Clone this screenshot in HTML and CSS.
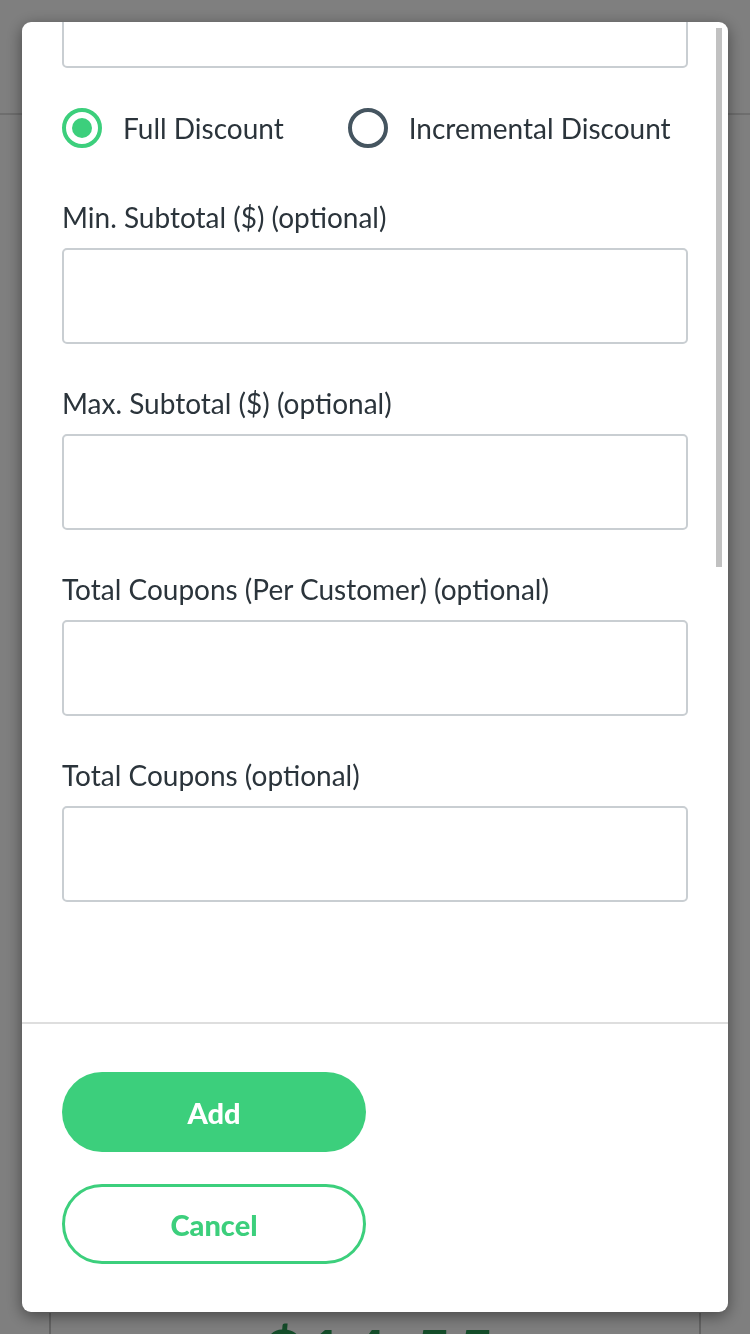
FILE: index.html
```html
<!DOCTYPE html>
<html lang="en">
<head>
<meta charset="utf-8">
<title>Add Coupon</title>
<link rel="stylesheet" href="styles.css">
</head>
<body>
<div class="page">
  <header class="page-header"></header>
  <section class="page-card">
    <div class="page-price">$14.55</div>
  </section>
</div>

<div class="overlay">
  <div class="modal">
    <div class="modal-body">
      <div class="modal-content">
        <div class="input input-first"></div>

        <div class="radio-row">
          <label class="radio">
            <span class="radio-circle radio-circle-on"><span class="radio-dot"></span></span>
            <span class="radio-text">Full Discount</span>
          </label>
          <label class="radio">
            <span class="radio-circle"></span>
            <span class="radio-text">Incremental Discount</span>
          </label>
        </div>

        <div class="field">
          <div class="field-label">Min. Subtotal ($) (optional)</div>
          <div class="input"></div>
        </div>
        <div class="field">
          <div class="field-label">Max. Subtotal ($) (optional)</div>
          <div class="input"></div>
        </div>
        <div class="field">
          <div class="field-label">Total Coupons (Per Customer) (optional)</div>
          <div class="input"></div>
        </div>
        <div class="field">
          <div class="field-label">Total Coupons (optional)</div>
          <div class="input"></div>
        </div>
      </div>
      <div class="scroll-thumb"></div>
    </div>
    <div class="modal-footer">
      <button class="btn btn-primary">Add</button>
      <button class="btn btn-outline">Cancel</button>
    </div>
  </div>
</div>
</body>
</html>
```

FILE: styles.css
```css
* { box-sizing: border-box; }

html, body {
  margin: 0;
  padding: 0;
  width: 750px;
  height: 1334px;
  overflow: hidden;
  font-family: Lato, "Open Sans", "Liberation Sans", sans-serif;
}

.page {
  height: 1334px;
  background: #ffffff;
  display: flex;
  flex-direction: column;
}

.page-header {
  height: 115px;
  border-bottom: 2px solid #dcdcdc;
}

.page-card {
  margin: auto 49px 0;
  height: 21px;
  border-left: 2px solid #c8c8c8;
  border-right: 2px solid #c8c8c8;
  display: flex;
  justify-content: center;
}

.page-price {
  font-size: 64px;
  line-height: 77px;
  font-weight: 700;
  color: #2a9a55;
  letter-spacing: 6px;
  white-space: nowrap;
  padding-left: 14px;
}

.overlay {
  position: fixed;
  inset: 0;
  background: rgba(0, 0, 0, 0.5);
  padding: 22px;
}

.modal {
  width: 706px;
  height: 1290px;
  background: #ffffff;
  border-radius: 9px;
  box-shadow: 0 4px 16px rgba(0, 0, 0, 0.45);
  display: flex;
  flex-direction: column;
  overflow: hidden;
}

.modal-body {
  position: relative;
  flex: 1;
  overflow: hidden;
}

.modal-content {
  margin-top: -50px;
  padding: 0 40px;
}

.scroll-thumb {
  position: absolute;
  top: 6px;
  right: 6px;
  width: 6px;
  height: 539px;
  background: #c1c1c1;
}

.input {
  height: 96px;
  border: 2px solid #c9ced2;
  border-radius: 5px;
  background: #ffffff;
}

.radio-row {
  display: flex;
  align-items: center;
  gap: 64px;
  margin-top: 40px;
  height: 40px;
}

.radio {
  display: flex;
  align-items: center;
  gap: 21px;
}

.radio-circle {
  width: 40px;
  height: 40px;
  border-radius: 50%;
  border: 4px solid #455560;
  display: flex;
  align-items: center;
  justify-content: center;
}

.radio-circle-on {
  border-color: #3ccf7c;
}

.radio-dot {
  width: 20px;
  height: 20px;
  border-radius: 50%;
  background: #3ccf7c;
}

.radio-text,
.field-label {
  font-size: 28px;
  line-height: 36px;
  color: #2b343b;
}

.field {
  display: flex;
  flex-direction: column;
  gap: 13px;
  margin-bottom: 41px;
}

.radio-row + .field {
  margin-top: 51px;
}

.modal-footer {
  border-top: 2px solid #dedede;
  padding: 48px 40px 48px;
  display: flex;
  flex-direction: column;
  align-items: flex-start;
  gap: 32px;
}

.btn {
  width: 304px;
  height: 80px;
  border-radius: 40px;
  font-family: Lato, "Open Sans", "Liberation Sans", sans-serif;
  font-size: 29px;
  font-weight: 900;
  line-height: 1;
  cursor: pointer;
}

.btn-primary {
  background: #3ccf7c;
  border: none;
  color: #ffffff;
}

.btn-outline {
  background: #ffffff;
  border: 3px solid #3ccf7c;
  color: #3ccf7c;
}
```
